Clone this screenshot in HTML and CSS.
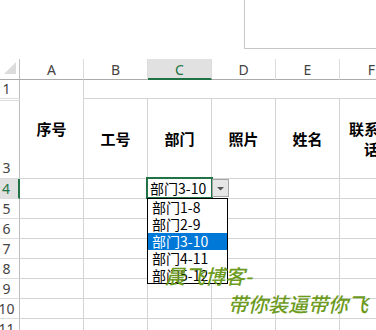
FILE: index.html
```html
<!DOCTYPE html>
<html lang="zh">
<head>
<meta charset="utf-8">
<link rel="stylesheet" href="styles.css">
</head>
<body>
<div class="top"><div class="frame"></div></div>
<div class="grid">
  <div class="corner"><svg width="19" height="20" viewBox="0 0 19 20"><polygon points="16,3 16,15 4,15" fill="#dcdcdc"/></svg></div>
  <div class="ch">A</div>
  <div class="ch">B</div>
  <div class="ch sel">C</div>
  <div class="ch">D</div>
  <div class="ch">E</div>
  <div class="ch">F</div>

  <div class="rh r1">1</div>
  <div class="cell hd a13">序号</div>
  <div class="cell b1f1"></div>

  <div class="rh r2"></div>
  <div class="rh r3">3</div>
  <div class="cell hd m23 cb">工号</div>
  <div class="cell hd m23 cc">部门</div>
  <div class="cell hd m23 cd">照片</div>
  <div class="cell hd m23 ce">姓名</div>
  <div class="cell hd m23 cf">联系电<br>话</div>

  <div class="rh sel">4</div>
  <div class="cell"></div><div class="cell"></div>
  <div class="cell active">部门3-10
    <div class="ddbtn"><svg width="15" height="16" viewBox="0 0 15 16"><polygon points="4,7 11,7 7.5,10.5" fill="#555"/></svg></div>
    <ul class="dlist">
      <li>部门1-8</li>
      <li>部门2-9</li>
      <li class="on">部门3-10</li>
      <li>部门4-11</li>
      <li>部门5-12</li>
    </ul>
  </div>
  <div class="cell"></div><div class="cell"></div><div class="cell"></div>

  <div class="rh">5</div><div class="cell"></div><div class="cell"></div><div class="cell"></div><div class="cell"></div><div class="cell"></div><div class="cell"></div>
  <div class="rh">6</div><div class="cell"></div><div class="cell"></div><div class="cell"></div><div class="cell"></div><div class="cell"></div><div class="cell"></div>
  <div class="rh">7</div><div class="cell"></div><div class="cell"></div><div class="cell"></div><div class="cell"></div><div class="cell"></div><div class="cell"></div>
  <div class="rh">8</div><div class="cell"></div><div class="cell"></div><div class="cell"></div><div class="cell"></div><div class="cell"></div><div class="cell"></div>
  <div class="rh">9</div><div class="cell"></div><div class="cell"></div><div class="cell"></div><div class="cell"></div><div class="cell"></div><div class="cell"></div>
  <div class="rh">10</div><div class="cell"></div><div class="cell"></div><div class="cell"></div><div class="cell"></div><div class="cell"></div><div class="cell"></div>
  <div class="rh">11</div><div class="cell"></div><div class="cell"></div><div class="cell"></div><div class="cell"></div><div class="cell"></div><div class="cell"></div>
</div>
<div class="wm wm1">晨飞博客-</div>
<div class="wm wm2">带你装逼带你飞</div>
</body>
</html>
```
FILE: styles.css
```css
* { box-sizing: border-box; }
html, body { margin: 0; padding: 0; }
body {
  width: 376px;
  height: 330px;
  overflow: hidden;
  position: relative;
  background: #fff;
  font-family: "Noto Sans CJK SC", "Noto Sans", sans-serif;
  color: #000;
}
.top {
  height: 59px;
  display: flex;
  justify-content: flex-end;
  align-items: flex-start;
}
.frame {
  width: 132px;
  height: 49px;
  border-left: 1px solid #c6c6c6;
  border-bottom: 1px solid #c6c6c6;
}
.grid {
  display: grid;
  width: 404px;
  grid-template-columns: 20px repeat(6, 64px);
  grid-template-rows: 21px 19px 2px 78px repeat(8, 20px);
}
.corner {
  border-right: 1px solid #bdbdbd;
  border-bottom: 1px solid #ababab;
}
.corner svg { display: block; }
.ch {
  border-right: 1px solid #dcdcdc;
  border-bottom: 1px solid #ababab;
  display: flex;
  align-items: center;
  justify-content: center;
  font-family: "Noto Sans", sans-serif;
  font-size: 14px;
  color: #444;
  padding-top: 1px;
}
.ch.sel {
  background: #e1e1e1;
  color: #217346;
  border-bottom: 2px solid #217346;
  padding-top: 2px;
}
.rh {
  border-right: 1px solid #bdbdbd;
  border-bottom: 1px solid #dcdcdc;
  display: flex;
  align-items: flex-end;
  justify-content: center;
  padding-right: 6px;
  font-family: "Noto Sans", sans-serif;
  font-size: 14px;
  line-height: 19px;
  color: #444;
  overflow: hidden;
}
.rh.r3 { padding-bottom: 1px; }
.rh.sel {
  background: #e1e1e1;
  color: #217346;
  border-right: 2px solid #217346;
}
.cell {
  border-right: 1px solid #d4d4d4;
  border-bottom: 1px solid #d4d4d4;
}
.hd {
  display: flex;
  align-items: center;
  justify-content: center;
  text-align: center;
  font-weight: 700;
  font-size: 15px;
  line-height: 20px;
}
.a13 { grid-column: 2; grid-row: 2 / 5; }
.b1f1 { grid-column: 3 / 8; grid-row: 2; }
.m23 { grid-row: 3 / 5; }
.cb { grid-column: 3; }
.cc { grid-column: 4; }
.cd { grid-column: 5; }
.ce { grid-column: 6; }
.cf { grid-column: 7; }
.active {
  position: relative;
  font-size: 14px;
  line-height: 19px;
  padding-left: 2px;
  white-space: nowrap;
}
.active::after {
  content: "";
  position: absolute;
  left: -2px;
  top: -2px;
  right: -2px;
  bottom: -1px;
  border: 2px solid #217346;
}
.ddbtn {
  position: absolute;
  left: 64px;
  top: 0;
  width: 17px;
  height: 18px;
  background: #e6e6e6;
  border: 1px solid #a6a6a6;
  z-index: 2;
}
.ddbtn svg { display: block; }
.dlist {
  position: absolute;
  left: -1px;
  top: 19px;
  width: 81px;
  height: 86px;
  margin: 0;
  padding: 0;
  list-style: none;
  background: #fff;
  border: 1px solid #000;
  z-index: 3;
}
.dlist li {
  height: 17px;
  line-height: 17px;
  padding-left: 4px;
  font-size: 14px;
}
.dlist li.on {
  background: #0078d7;
  color: #fff;
}
.wm {
  position: absolute;
  z-index: 5;
  white-space: nowrap;
  color: #6c9b1e;
  font-style: italic;
  font-weight: 500;
  font-size: 20px;
  line-height: 20px;
}
.wm1 { left: 165px; top: 266px; }
.wm2 { left: 228px; top: 294px; }
```
